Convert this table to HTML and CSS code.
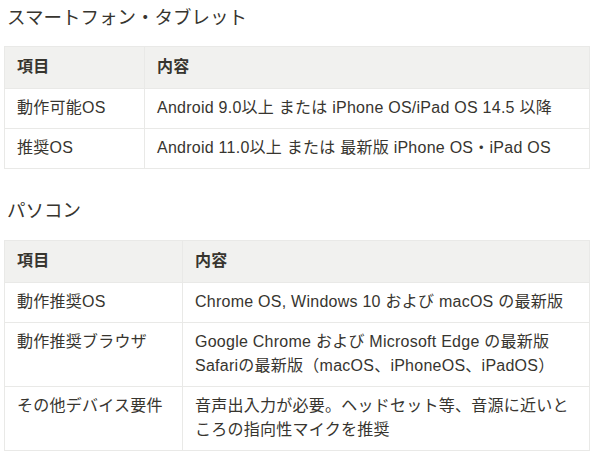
FILE: index.html
```html
<!DOCTYPE html>
<html lang="ja">
<head>
<meta charset="utf-8">
<link rel="stylesheet" href="styles.css">
</head>
<body>
<main class="page">
  <h3 class="heading first">スマートフォン・タブレット</h3>
  <table class="spec">
    <colgroup><col class="c1a"><col></colgroup>
    <thead>
      <tr><th>項目</th><th>内容</th></tr>
    </thead>
    <tbody>
      <tr><td>動作可能OS</td><td>Android 9.0以上 または iPhone OS/iPad OS 14.5 以降</td></tr>
      <tr><td>推奨OS</td><td>Android 11.0以上 または 最新版 iPhone OS・iPad OS</td></tr>
    </tbody>
  </table>

  <h3 class="heading second">パソコン</h3>
  <table class="spec">
    <colgroup><col class="c1b"><col></colgroup>
    <thead>
      <tr><th>項目</th><th>内容</th></tr>
    </thead>
    <tbody>
      <tr><td>動作推奨OS</td><td>Chrome OS, Windows 10 および macOS の最新版</td></tr>
      <tr><td>動作推奨ブラウザ</td><td>Google Chrome および Microsoft Edge の最新版<br>Safariの最新版（macOS、iPhoneOS、iPadOS）</td></tr>
      <tr><td>その他デバイス要件</td><td>音声出入力が必要。ヘッドセット等、音源に近いところの指向性マイクを推奨</td></tr>
    </tbody>
  </table>
</main>
</body>
</html>
```

FILE: styles.css
```css
html, body {
  margin: 0;
  padding: 0;
  background: #ffffff;
}
body {
  font-family: "Liberation Sans", "Noto Sans CJK JP", sans-serif;
  color: #37352f;
}
.page {
  padding: 0 0 0 4px;
  width: 586px;
}
.heading {
  font-family: "Noto Sans CJK JP", sans-serif;
  font-size: 18.5px;
  font-weight: 400;
  line-height: 26px;
  margin: 0;
  padding-left: 3px;
}
.heading.first {
  margin-top: 3px;
  margin-bottom: 17px;
}
.heading.second {
  margin-top: 27px;
  margin-bottom: 18px;
}
.spec {
  width: 586px;
  border-collapse: collapse;
  table-layout: fixed;
  font-size: 16px;
  line-height: 24px;
  letter-spacing: 0.25px;
}
.c1a { width: 140px; }
.c1b { width: 178px; }
.spec th,
.spec td {
  border: 1px solid #e9e9e7;
  text-align: left;
  vertical-align: top;
  padding: 7px 12px 8px;
}
.spec th {
  background: #f1f1ef;
  font-weight: 700;
  padding: 8px 12px 9px;
}
```
